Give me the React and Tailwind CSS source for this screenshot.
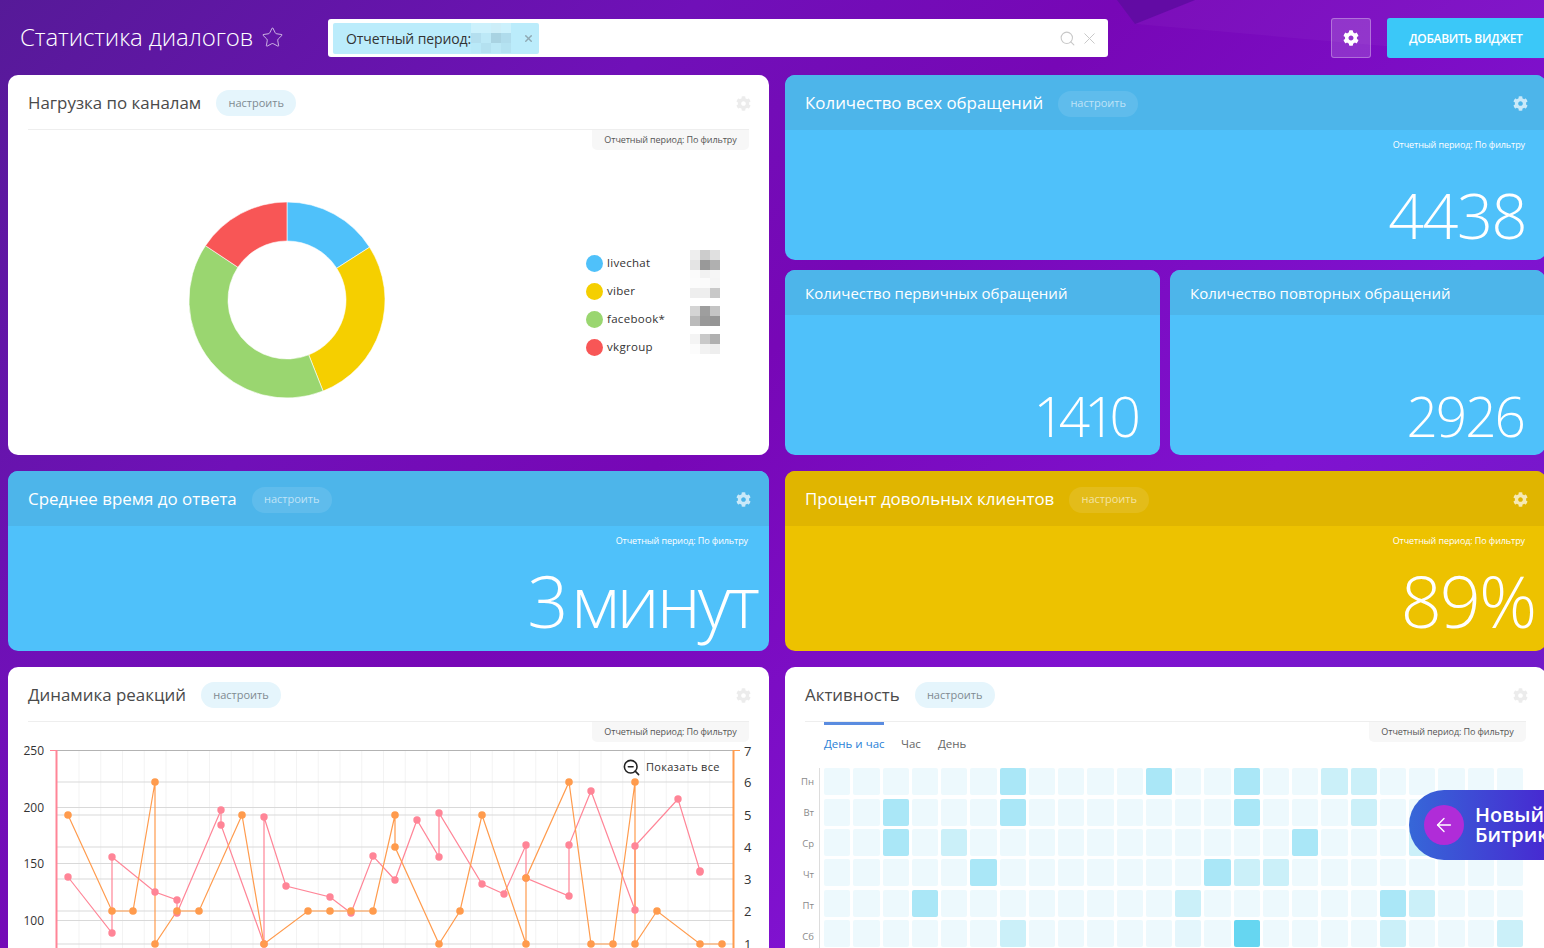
import React from "react";
import { FaCog } from "react-icons/fa";
import { Star, Search, X, ZoomOut, ArrowLeft } from "lucide-react";

const pink = "#ff8597";
const orange = "#ff9b4d";

function PixelBlock({ rows, cell = "w-[10px] h-[10px]" }) {
  return (
    <div className="flex flex-col">
      {rows.map((r, i) => (
        <div key={i} className="flex">
          {r.map((c, j) => (
            <div key={j} className={cell + " " + c} />
          ))}
        </div>
      ))}
    </div>
  );
}

function Pill({ tone }) {
  const cls = tone === "white" ? "bg-[#e5f5fc] text-[#7f8a91]" : "bg-white/10 text-white/60";
  return (
    <span className={"ml-[15px] flex h-[26px] w-[80px] items-center justify-center rounded-full text-[11px] " + cls}>
      настроить
    </span>
  );
}

function WhiteCard({ title, children, className = "" }) {
  return (
    <div className={"relative rounded-[10px] bg-white " + className}>
      <div className="mx-5 flex h-[55px] items-center border-b border-[#eeeeee] pt-[2px]">
        <span className="text-[16.9px] leading-none text-[#4a4a4a]">{title}</span>
        <Pill tone="white" />
        <FaCog className="ml-auto mr-[-2px] size-[15px] text-[#ececec]" />
      </div>
      <div className="absolute right-5 top-[55px] z-10 flex h-5 w-[157px] items-center justify-center rounded-bl-[5px] rounded-br-[5px] bg-[#f7f7f7] text-[9px] tracking-[-0.1px] text-[#555555]">
        Отчетный период: По фильтру
      </div>
      {children}
    </div>
  );
}

function StatCard({ title, value, color = "blue", pill = true, compact = false, big = false, pr = "pr-[20px]", size = "text-[63px] tracking-[-1.5px]" }) {
  const yellow = color === "yellow";
  return (
    <div className={"flex h-full flex-col overflow-hidden rounded-[10px] " + (yellow ? "bg-[#edc200]" : "bg-[#4fc1fa]")}>
      <div className={"flex shrink-0 items-center px-5 " + (compact ? "h-[45px] pt-[2px] " : "h-[55px] pt-[2px] ") + (yellow ? "bg-[#e0b500]" : "bg-[#4db5ea]")}>
        <span className={(compact ? "text-[15px]" : "text-[16.9px]") + " font-medium leading-none text-white"}>{title}</span>
        {pill && <Pill tone={color} />}
        {pill && <FaCog className="ml-auto mr-[-2px] size-[15px] text-white/70" />}
      </div>
      {!compact && (
        <div className="mt-[8px] pr-[21px] text-right text-[9px] leading-[14px] tracking-[-0.1px] text-white">Отчетный период: По фильтру</div>
      )}
      <div className={"mt-auto whitespace-nowrap text-right font-light leading-none text-white " + pr + " " + size + (big ? " pb-[15px]" : compact ? " pb-[12px]" : " pb-[14px]")}>
        {value}
      </div>
    </div>
  );
}

function Donut() {
  const cx = 98, cy = 98, R = 98, r = 59;
  const segs = [
    [0, 57.4, "#4fc1fa"],
    [57.4, 158.4, "#f5cf00"],
    [158.4, 303.7, "#9ad670"],
    [303.7, 360, "#f85656"],
  ];
  const pt = (rad, a) => {
    const t = (a * Math.PI) / 180;
    return [cx + rad * Math.sin(t), cy - rad * Math.cos(t)];
  };
  return (
    <svg width="196" height="196" viewBox="0 0 196 196" className="shrink-0">
      {segs.map(([a, b, c], i) => {
        const [x1, y1] = pt(R, a);
        const [x2, y2] = pt(R, b);
        const [x3, y3] = pt(r, b);
        const [x4, y4] = pt(r, a);
        const large = b - a > 180 ? 1 : 0;
        return (
          <path
            key={i}
            fill={c}
            stroke="#fff"
            strokeWidth="0.6"
            d={`M${x1} ${y1}A${R} ${R} 0 ${large} 1 ${x2} ${y2}L${x3} ${y3}A${r} ${r} 0 ${large} 0 ${x4} ${y4}Z`}
          />
        );
      })}
    </svg>
  );
}

const legend = [
  {
    name: "livechat",
    dot: "bg-[#4fc1fa]",
    px: [
      ["bg-[#eeeeee]", "bg-[#cccccc]", "bg-[#e0e0e0]"],
      ["bg-[#e4e4e4]", "bg-[#999999]", "bg-[#b0b0b0]"],
      ["bg-[#fbfbfb]", "bg-[#f2f2f2]", "bg-[#f6f6f6]"],
    ],
  },
  {
    name: "viber",
    dot: "bg-[#f5cf00]",
    px: [
      ["bg-[#fcfcfc]", "bg-[#fbfbfb]", "bg-[#f5f5f5]"],
      ["bg-[#eeeeee]", "bg-[#eeeeee]", "bg-[#c8c8c8]"],
    ],
  },
  {
    name: "facebook*",
    dot: "bg-[#9ad670]",
    px: [
      ["bg-[#d4d4d4]", "bg-[#9e9e9e]", "bg-[#c4c4c4]"],
      ["bg-[#bbbbbb]", "bg-[#999999]", "bg-[#959595]"],
    ],
  },
  {
    name: "vkgroup",
    dot: "bg-[#f85656]",
    px: [
      ["bg-[#f4f4f4]", "bg-[#c9c9c9]", "bg-[#b0b0b0]"],
      ["bg-[#fcfcfc]", "bg-[#f2f2f2]", "bg-[#eeeeee]"],
    ],
  },
];

function Legend() {
  return (
    <div className="flex w-[135px] flex-col">
      {legend.map((l) => (
        <div key={l.name} className="relative flex h-[28px] items-center">
          <span className={"size-[17px] rounded-full " + l.dot} />
          <span className="ml-[4px] text-[11.5px] tracking-[0.3px] text-[#333333]">{l.name}</span>
          <div className="absolute left-[104px] top-[1px]">
            <PixelBlock rows={l.px} />
          </div>
        </div>
      ))}
    </div>
  );
}

const pinkPts = [[68,877],[112,933],[112,857],[155,892],[177,900],[177,913],[221,810],[221,825],[264,944],[264,817],[286,886],[330,897],[351,913],[373,856],[395,880],[417,820],[439,857],[439,813],[482,884],[504,894],[526,845],[526,878],[569,896],[569,845],[591,791],[635,910],[635,846],[678,799],[700,871],[700,872]];
const orangePts = [[68,815],[112,911],[133,911],[155,782],[155,944],[177,911],[199,911],[242,815],[264,944],[308,911],[330,911],[351,911],[373,911],[395,815],[395,847],[439,944],[460,911],[482,815],[526,944],[526,878],[569,782],[591,944],[613,944],[635,782],[635,944],[657,911],[700,944],[722,944]];

function Chart() {
  const hLines = [782, 807.5, 815, 847, 863.5, 879, 911, 920.5, 944];
  const vLines = Array.from({ length: 30 }, (_, i) => 79 + i * 21.75);
  return (
    <svg width="761" height="240" viewBox="8 722 761 240" className="block">
      {vLines.map((x) => (
        <line key={x} x1={x} x2={x} y1="751" y2="962" stroke="#f3f3f3" />
      ))}
      {hLines.map((y) => (
        <line key={y} x1="56" x2="733" y1={y} y2={y} stroke="#d9d9d9" />
      ))}
      <line x1="56" x2="733" y1="750.5" y2="750.5" stroke="#b3b3b3" />
      <line x1="56.5" x2="56.5" y1="750" y2="962" stroke={pink} strokeWidth="2" />
      <line x1="50" x2="56" y1="750.5" y2="750.5" stroke={pink} />
      <line x1="733.5" x2="733.5" y1="750" y2="962" stroke={orange} strokeWidth="2" />
      <line x1="733" x2="740" y1="750.5" y2="750.5" stroke={orange} />
      {[["250", 750.5], ["200", 807.5], ["150", 863.5], ["100", 920.5]].map(([t, y]) => (
        <text key={t} x="44" y={y + 4} textAnchor="end" fontSize="12" fill="#333">{t}</text>
      ))}
      {[["7", 750.5], ["6", 782], ["5", 815], ["4", 847], ["3", 879], ["2", 911], ["1", 944]].map(([t, y]) => (
        <text key={t} x="744" y={y + 5} fontSize="13" fill="#333">{t}</text>
      ))}
      <polyline fill="none" stroke={pink} strokeWidth="1.2" points={pinkPts.map((p) => p.join(",")).join(" ")} />
      <polyline fill="none" stroke={orange} strokeWidth="1.2" points={orangePts.map((p) => p.join(",")).join(" ")} />
      {pinkPts.map(([x, y], i) => (
        <circle key={i} cx={x} cy={y} r="3.7" fill={pink} />
      ))}
      {orangePts.map(([x, y], i) => (
        <circle key={i} cx={x} cy={y} r="3.8" fill={orange} />
      ))}
    </svg>
  );
}

const M = "bg-[#aae7f7]";
const L = "bg-[#cbf0f9]";
const S = "bg-[#66d6f1]";
const V = "bg-[#e4f6fc]";
const D = "bg-[#edf9fd]";
const heat = [
  { d: "Пн", c: { 6: M, 11: M, 14: M, 17: L, 18: L } },
  { d: "Вт", c: { 2: M, 6: M, 14: M, 18: L } },
  { d: "Ср", c: { 2: M, 4: L, 16: M, 20: L } },
  { d: "Чт", c: { 5: M, 13: M, 14: L, 15: L } },
  { d: "Пт", c: { 3: M, 12: L, 19: M, 20: L } },
  { d: "Сб", c: { 6: L, 12: V, 14: S, 19: L, 23: L } },
];

function Heatmap() {
  return (
    <div className="flex pl-[14px] pr-[23px]">
      <div className="flex w-[21px] shrink-0 flex-col gap-1 border-r border-[#dddddd] pr-[5px]">
        {heat.map((r) => (
          <div key={r.d} className="flex h-[27px] items-center justify-end text-[9.5px] text-[#8a8a8a]">{r.d}</div>
        ))}
      </div>
      <div className="ml-[4px] flex flex-1 flex-col gap-[3.4px]">
        {heat.map((r) => (
          <div key={r.d} className="grid grid-cols-[repeat(24,1fr)] gap-x-[3px]">
            {Array.from({ length: 24 }, (_, i) => (
              <div key={i} className={"h-[27px] rounded-[2px] " + (r.c[i] || D)} />
            ))}
          </div>
        ))}
      </div>
    </div>
  );
}

export default function App() {
  return (
    <div className="relative h-[948px] w-[1544px] overflow-hidden bg-[linear-gradient(135deg,#561a98_0%,#7010b8_28%,#7707b6_45%,#8012d0_70%,#6a20c4_100%)] font-['Open_Sans','Noto_Sans',sans-serif]">
      <svg className="absolute left-[1100px] top-0" width="444" height="75" viewBox="0 0 444 75">
        <polygon points="17,0 95,0 35,24" fill="#5c0d9f" opacity="0.8" />
        <polygon points="95,0 444,0 444,60 35,24" fill="#ffffff" opacity="0.03" />
      </svg>

      <header className="relative flex h-[75px] items-center pb-[1px]">
        <h1 className="ml-5 text-[24px] font-light leading-none tracking-[-0.1px] text-white">Статистика диалогов</h1>
        <Star className="ml-[8px] size-[23px] text-white/70" strokeWidth={1} />
        <div className="absolute left-[328px] top-[19px] flex h-[38px] w-[780px] items-center rounded-[3px] bg-white pl-[5px] pr-[9px]">
          <div className="flex h-[31px] w-[206px] items-center overflow-hidden rounded-[2px] bg-[#bbecfb] pl-[13px]">
            <span className="text-[14px] tracking-[-0.1px] text-[#333333]">Отчетный период:</span>
            <PixelBlock
              rows={[
                ["bg-[#ccf1fc]", "bg-[#ccf1fc]", "bg-[#cdeef8]", "bg-[#ccf1fc]"],
                ["bg-[#b4dfef]", "bg-[#bde9f7]", "bg-[#a9d3e2]", "bg-[#b0dcec]"],
                ["bg-[#b9e9f8]", "bg-[#b4e1f0]", "bg-[#bbe8f6]", "bg-[#b4e2f1]"],
              ]}
            />
            <X className="ml-[12px] size-[11px] text-[#8fa9b3]" strokeWidth={3} />
          </div>
          <Search className="ml-auto size-[17px] text-[#c8c8c8]" strokeWidth={1.5} />
          <X className="ml-[4px] size-[19px] text-[#c8c8c8]" strokeWidth={1.25} />
        </div>
        <div className="absolute left-[1331px] top-[18px] flex size-10 items-center justify-center rounded-[3px] border border-white/30 bg-white/15">
          <FaCog className="size-4 text-white" />
        </div>
        <div className="absolute left-[1387px] top-[18px] flex h-10 w-[170px] items-center rounded-l-[3px] bg-[#3bc8f8] pl-[22px] pt-[1px] text-[12px] font-semibold tracking-[-0.35px] text-white">
          ДОБАВИТЬ ВИДЖЕТ
        </div>
      </header>

      <div className="flex flex-col gap-4">
        <div className="grid grid-cols-[761px_761px] gap-x-4 pl-2">
          <WhiteCard title="Нагрузка по каналам" className="h-[380px]">
            <div className="flex h-[325px] items-center pl-[181px] pt-[15px]">
              <Donut />
              <div className="ml-[201px] mt-[10px]">
                <Legend />
              </div>
            </div>
          </WhiteCard>
          <div className="flex h-[380px] flex-col gap-[10px]">
            <div className="h-[185px]">
              <StatCard title="Количество всех обращений" value="4438" />
            </div>
            <div className="grid h-[185px] grid-cols-[375px_375px] gap-x-[10px]">
              <StatCard title="Количество первичных обращений" value="1410" compact pill={false} pr="pr-[25px]" size="text-[55px] tracking-[-6px]" />
              <StatCard title="Количество повторных обращений" value="2926" compact pill={false} pr="pr-[21px]" size="text-[55px] tracking-[-2px]" />
            </div>
          </div>
        </div>

        <div className="grid h-[180px] grid-cols-[761px_761px] gap-x-4 pl-2">
          <StatCard title="Среднее время до ответа" value="3 минут" big pr="pr-[12px]" size="text-[72px] tracking-[-3px] [word-spacing:-10px]" />
          <StatCard title="Процент довольных клиентов" value="89%" color="yellow" big pr="pr-[11px]" size="text-[72px] tracking-[-2px]" />
        </div>

        <div className="grid h-[400px] grid-cols-[761px_761px] gap-x-4 pl-2">
          <WhiteCard title="Динамика реакций">
            <Chart />
            <div className="absolute left-[614px] top-[91px] flex items-center gap-[5px] text-[11px] tracking-[0.3px] text-[#333333]">
              <ZoomOut className="size-[19px] text-[#222222]" strokeWidth={2} />
              Показать все
            </div>
          </WhiteCard>
          <WhiteCard title="Активность">
            <div className="ml-[39px] flex gap-[17px] text-[11.5px] text-[#666666]">
              <div className="w-[60px] whitespace-nowrap border-t-[3px] border-[#5a8ce0] pt-[10px] text-[#2a7fd6]">День и час</div>
              <div className="pt-[13px]">Час</div>
              <div className="pt-[13px]">День</div>
            </div>
            <div className="mt-[16px]">
              <Heatmap />
            </div>
          </WhiteCard>
        </div>
      </div>

      <div className="absolute left-[1409px] top-[790px] z-20 flex h-[70px] w-[160px] items-center rounded-l-full bg-[linear-gradient(90deg,#3667d8,#4a1fd0)] pl-[15px]">
        <div className="flex size-10 shrink-0 items-center justify-center rounded-full bg-[#b02cd8]">
          <ArrowLeft className="size-[22px] text-white" strokeWidth={1.5} />
        </div>
        <div className="ml-[11px] text-[20px] font-semibold leading-[20px] text-white">
          Новый
          <br />
          Битрикс24
        </div>
      </div>
    </div>
  );
}
